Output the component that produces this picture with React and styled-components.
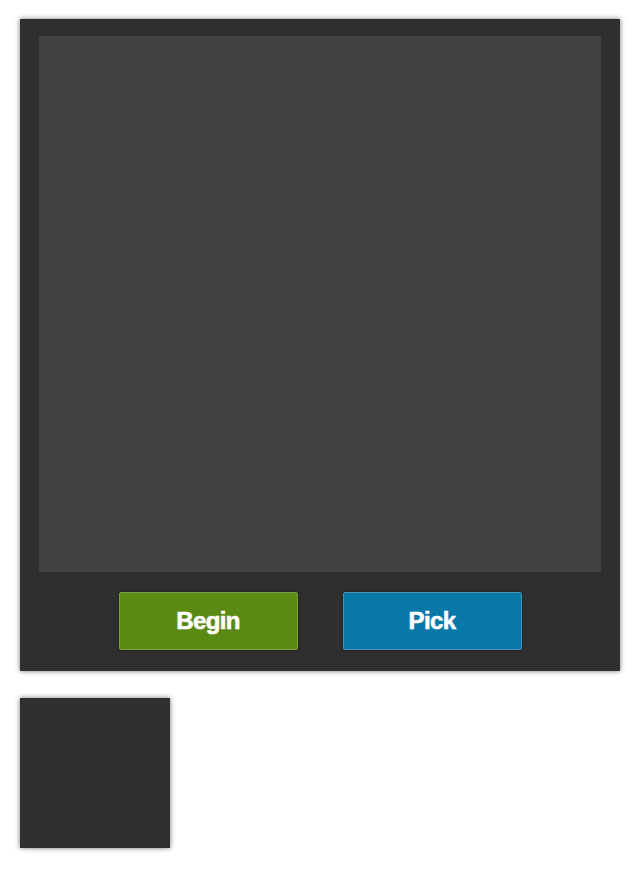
import styled, { createGlobalStyle } from "styled-components";

const GlobalStyle = createGlobalStyle`
  html, body {
    margin: 0;
    padding: 0;
    background: #ffffff;
  }

  body {
    font-family: "Liberation Sans", Arial, sans-serif;
  }
`;

const Page = styled.div`
  display: flex;
  flex-direction: column;
  align-items: flex-start;
  gap: 27px;
  padding: 19px 20px;
`;

const Board = styled.div`
  width: 600px;
  box-sizing: border-box;
  padding: 17px 19px 21px;
  background: #2f2f2f;
  box-shadow: 0 0 5px rgba(0, 0, 0, 0.55);
  display: flex;
  flex-direction: column;
  gap: 20px;
`;

const Canvas = styled.div`
  height: 536px;
  background: #424242;
`;

const Controls = styled.div`
  display: flex;
  justify-content: center;
  gap: 45px;
`;

const Button = styled.button`
  width: 179px;
  height: 58px;
  box-sizing: border-box;
  border: 1px solid ${(p) => p.$border};
  border-radius: 2px;
  background: ${(p) => p.$bg};
  color: #ffffff;
  font-family: "Liberation Sans", Arial, sans-serif;
  font-weight: 700;
  font-size: 24px;
  letter-spacing: -0.6px;
  -webkit-text-stroke: 0.6px #ffffff;
  cursor: pointer;
  box-shadow: 0 0 3px rgba(0, 0, 0, 0.45);
`;

const Tile = styled.div`
  width: 150px;
  height: 150px;
  background: #2f2f2f;
  box-shadow: 0 0 5px rgba(0, 0, 0, 0.55);
`;

export default function App() {
  return (
    <>
      <GlobalStyle />
      <Page>
        <Board>
          <Canvas />
          <Controls>
            <Button $bg="#5b8a14" $border="#7aa04a">
              Begin
            </Button>
            <Button $bg="#0878a8" $border="#4a93b4">
              Pick
            </Button>
          </Controls>
        </Board>
        <Tile />
      </Page>
    </>
  );
}
